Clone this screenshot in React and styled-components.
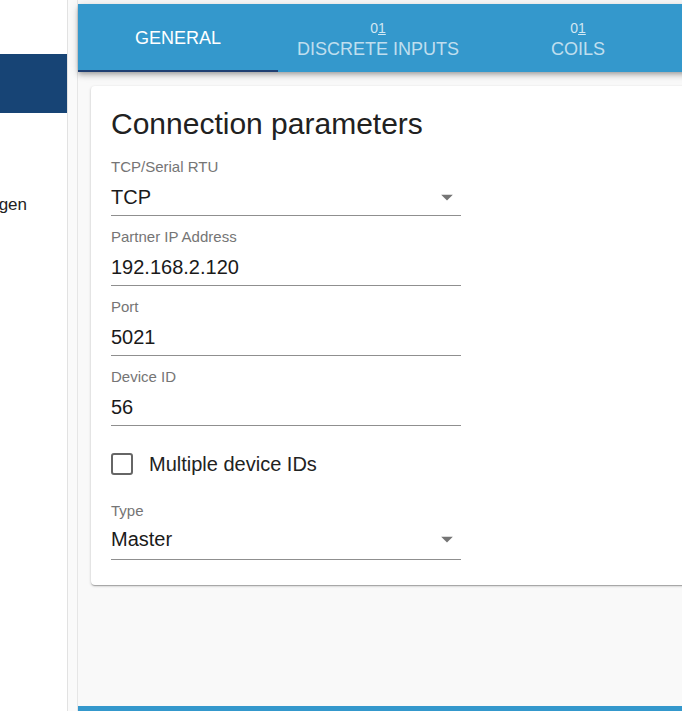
import React from 'react'
import styled, { createGlobalStyle } from 'styled-components'

const GlobalStyle = createGlobalStyle`
    html, body {
        margin: 0;
        padding: 0;
        background: #ffffff;
        font-family: "Liberation Sans", Arial, sans-serif;
    }
    body {
        overflow: hidden;
    }
`

const Viewport = styled.div`
    width: 682px;
    height: 711px;
    overflow: hidden;
`

const Layout = styled.div`
    display: flex;
    width: 1000px;
    height: 711px;
`

const Sidebar = styled.nav`
    width: 67px;
    flex-shrink: 0;
    background: #ffffff;
    border-right: 1px solid #e2e2e2;
    padding-top: 54px;
    box-sizing: content-box;
    overflow: hidden;
`

const NavItem = styled.div`
    height: ${(p) => p.height || 48}px;
    display: flex;
    align-items: center;
    justify-content: flex-end;
    padding-right: 40px;
    overflow: hidden;
    white-space: nowrap;
    font-size: 17px;
    color: #222222;
    background: ${(p) => (p.active ? '#174475' : 'transparent')};
`

const Gutter = styled.div`
    width: 9px;
    flex-shrink: 0;
    background: #fafafa;
    border-right: 1px solid #e6e6e6;
`

const Main = styled.main`
    flex: 1;
    display: flex;
    flex-direction: column;
    background: #f9f9f9;
    padding-top: 4px;
`

const TabBar = styled.div`
    display: flex;
    height: 68px;
    background: #3498cc;
    box-shadow: 0 2px 4px -1px rgba(0, 0, 0, 0.2), 0 4px 5px 0 rgba(0, 0, 0, 0.14), 0 1px 10px 0 rgba(0, 0, 0, 0.12);
    position: relative;
    z-index: 1;
`

const Tab = styled.div`
    width: 200px;
    display: flex;
    flex-direction: column;
    align-items: center;
    justify-content: center;
    box-sizing: border-box;
    border-bottom: 2px solid ${(p) => (p.active ? '#1f3f72' : 'transparent')};
    padding-top: ${(p) => (p.active ? 2 : 6)}px;
    color: ${(p) => (p.active ? '#ffffff' : 'rgba(255, 255, 255, 0.7)')};
`

const TabCount = styled.div`
    font-size: 14px;
    line-height: 15px;
    margin-bottom: 2px;
    color: rgba(255, 255, 255, 0.78);

    span {
        text-decoration: underline;
    }
`

const TabLabel = styled.div`
    font-size: 18px;
    line-height: 22px;
`

const Content = styled.div`
    flex: 1;
    padding: 14px 13px 0;
`

const Card = styled.section`
    background: #ffffff;
    border-radius: 4px;
    box-shadow: 0 1px 3px 0 rgba(0, 0, 0, 0.2), 0 1px 1px 0 rgba(0, 0, 0, 0.14), 0 2px 1px -1px rgba(0, 0, 0, 0.12);
    padding: 21px 20px 25px;
`

const Title = styled.h2`
    margin: 0 0 18px;
    font-size: 30px;
    line-height: 34px;
    font-weight: 400;
    color: #212121;
`

const Field = styled.div`
    width: 350px;
    margin-bottom: ${(p) => p.gap ?? 13}px;
`

const Label = styled.div`
    font-size: 15px;
    line-height: 16px;
    color: #757575;
`

const Input = styled.div`
    display: flex;
    align-items: center;
    justify-content: space-between;
    height: 24px;
    margin-top: ${(p) => (p.tight ? 8 : 10)}px;
    padding-bottom: ${(p) => (p.tight ? 8 : 6)}px;
    border-bottom: 1px solid #8f8f8f;
    font-size: 20px;
    line-height: 24px;
    color: #1a1a1a;
`

const Arrow = styled.svg`
    width: 28px;
    height: 28px;
    fill: #757575;
`

const CheckRow = styled.label`
    display: flex;
    align-items: center;
    height: 36px;
    margin: 20px 0 21px;
    font-size: 20px;
    color: #222222;
`

const Box = styled.span`
    width: 18px;
    height: 18px;
    border: 2px solid #666666;
    border-radius: 3px;
    margin-right: 16px;
`

const Footer = styled.div`
    height: 5px;
    background: #3498cc;
`

const Select = ({ label, value, tight, gap }) => (
    <Field gap={gap}>
        <Label>{label}</Label>
        <Input tight={tight}>
            {value}
            <Arrow viewBox="0 0 24 24"><path d="M7 10l5 5 5-5z" /></Arrow>
        </Input>
    </Field>
)

const TextField = ({ label, value, gap }) => (
    <Field gap={gap}>
        <Label>{label}</Label>
        <Input>{value}</Input>
    </Field>
)

const tabs = [
    { label: 'GENERAL', active: true },
    { label: 'DISCRETE INPUTS', count: true },
    { label: 'COILS', count: true },
    { label: 'HOLDING REGISTERS', count: true },
]

const App = () => {
    return (
        <Viewport>
            <GlobalStyle />
            <Layout>
                <Sidebar>
                    <NavItem active height={59} />
                    <NavItem height={68} />
                    <NavItem height={48}>Einstellungen</NavItem>
                </Sidebar>
                <Gutter />
                <Main>
                    <TabBar>
                        {tabs.map((t) => (
                            <Tab key={t.label} active={t.active}>
                                {t.count && <TabCount>0<span>1</span></TabCount>}
                                <TabLabel>{t.label}</TabLabel>
                            </Tab>
                        ))}
                    </TabBar>
                    <Content>
                        <Card>
                            <Title>Connection parameters</Title>
                            <Select label="TCP/Serial RTU" value="TCP" />
                            <TextField label="Partner IP Address" value="192.168.2.120" />
                            <TextField label="Port" value="5021" />
                            <TextField label="Device ID" value="56" gap={0} />
                            <CheckRow>
                                <Box />
                                Multiple device IDs
                            </CheckRow>
                            <Select label="Type" value="Master" tight gap={0} />
                        </Card>
                    </Content>
                    <Footer />
                </Main>
            </Layout>
        </Viewport>
    )
}

export default App
